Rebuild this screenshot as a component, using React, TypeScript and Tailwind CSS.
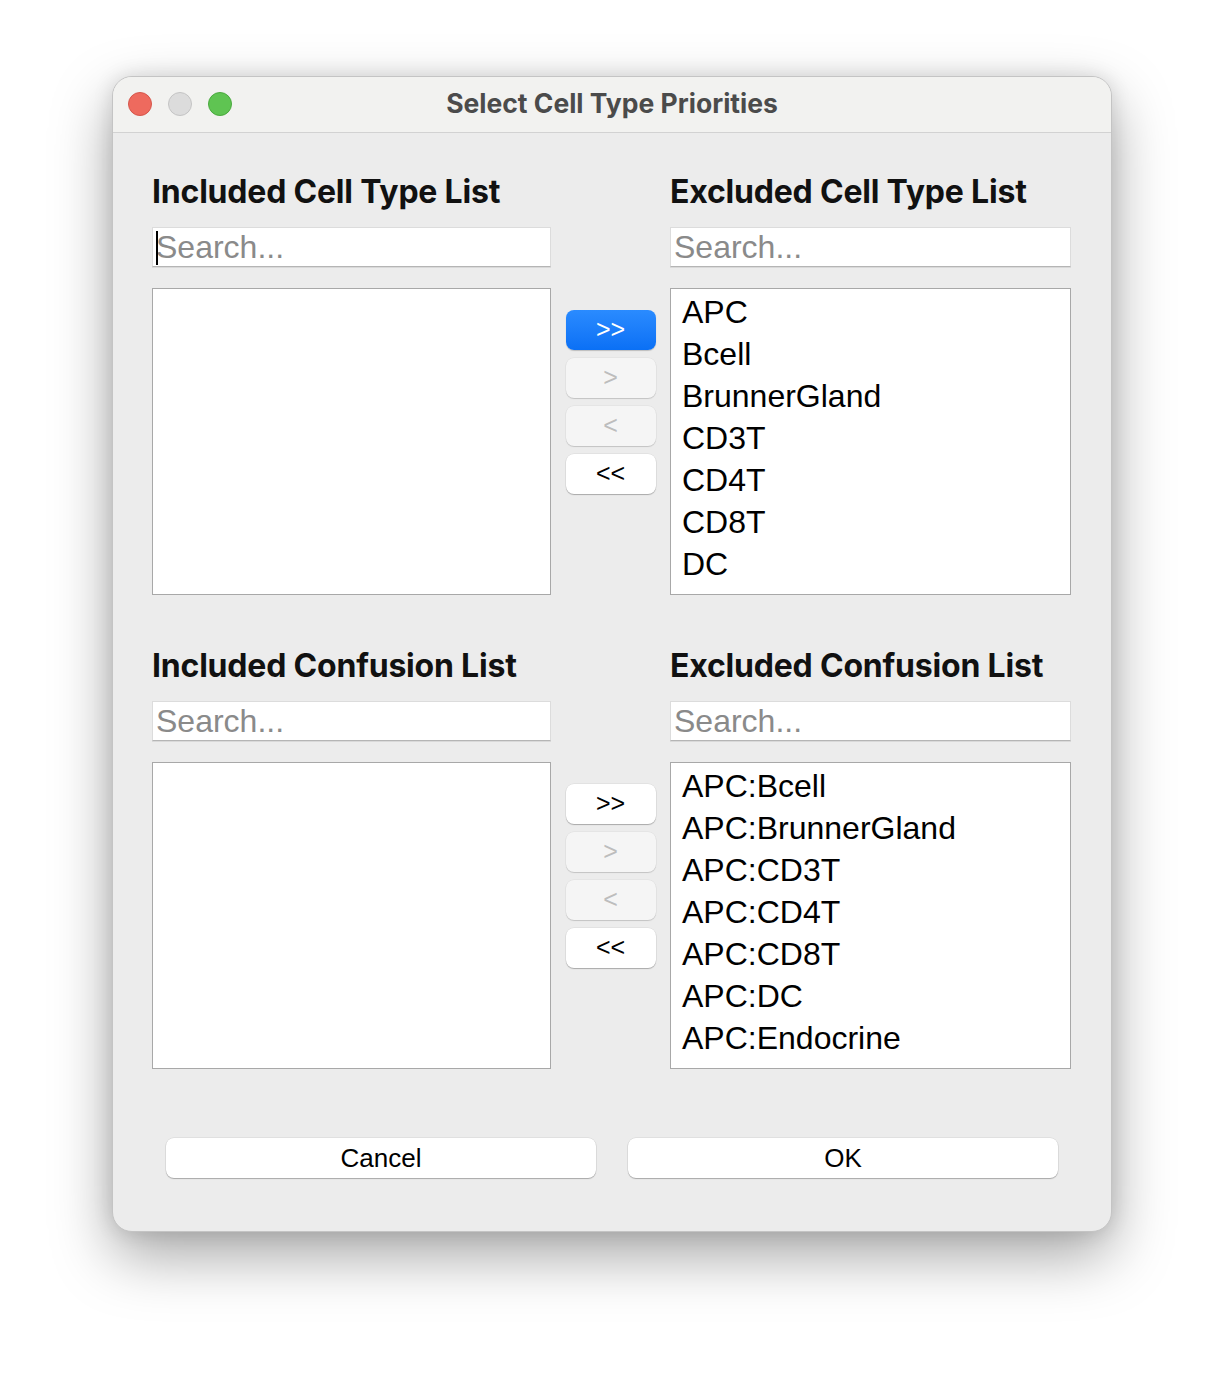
import React from "react";

const cellTypes = ["APC", "Bcell", "BrunnerGland", "CD3T", "CD4T", "CD8T", "DC", "Endocrine"];
const confusions = ["APC:Bcell", "APC:BrunnerGland", "APC:CD3T", "APC:CD4T", "APC:CD8T", "APC:DC", "APC:Endocrine", "APC:Endothelial"];

function SearchBox({ caret }: { caret?: boolean }) {
  return (
    <div className="relative h-[40px] w-full bg-white border border-[#dcdcdc] border-b-[#b5b5b5] shadow-[0_1px_0_rgba(0,0,0,0.08)] flex items-center pl-[3px]">
      {caret && <div className="absolute left-[3px] top-[3px] h-[34px] w-[2px] bg-black" />}
      <span className="text-[32px] leading-none text-[#8a8a8a] font-['Liberation_Sans',sans-serif]">Search...</span>
    </div>
  );
}

function ListBox({ items }: { items: string[] }) {
  return (
    <div className="h-[307px] w-full bg-white border border-[#a8a8a8] overflow-hidden pl-[11px] pt-[2px]">
      {items.map((t) => (
        <div key={t} className="h-[42px] leading-[42px] text-[32px] text-black font-['Liberation_Sans',sans-serif] whitespace-nowrap">
          {t}
        </div>
      ))}
    </div>
  );
}

function ArrowBtn({ label, variant }: { label: string; variant: "primary" | "disabled" | "normal" }) {
  const base = "h-[40px] w-[90px] rounded-[8px] flex items-center justify-center text-[25px] font-['Liberation_Sans',sans-serif]";
  const cls =
    variant === "primary"
      ? "bg-gradient-to-b from-[#2a8bff] to-[#0a70f5] text-white shadow-[0_1px_1px_rgba(0,0,0,0.2)]"
      : variant === "disabled"
      ? "bg-[#f5f5f5] text-[#bdbdbd] shadow-[0_1px_1px_rgba(0,0,0,0.15),0_0_0_0.5px_rgba(0,0,0,0.06)]"
      : "bg-white text-black shadow-[0_1px_1px_rgba(0,0,0,0.25),0_0_0_0.5px_rgba(0,0,0,0.08)]";
  return <div className={`${base} ${cls}`}>{label}</div>;
}

function Section({ leftTitle, rightTitle, items, primaryFirst, caret }: { leftTitle: string; rightTitle: string; items: string[]; primaryFirst?: boolean; caret?: boolean }) {
  return (
    <div className="flex items-start">
      <div className="w-[399px] flex flex-col">
        <h2 className="h-[36px] text-[32px] leading-[38px] font-bold text-[#111] font-['Inter',sans-serif] tracking-[-0.2px] whitespace-nowrap">{leftTitle}</h2>
        <div className="mt-[18px]"><SearchBox caret={caret} /></div>
        <div className="mt-[21px]"><ListBox items={[]} /></div>
      </div>
      <div className="w-[119px] flex flex-col items-center gap-[8px] pt-[137px]">
        <ArrowBtn label=">>" variant={primaryFirst ? "primary" : "normal"} />
        <ArrowBtn label=">" variant="disabled" />
        <ArrowBtn label="<" variant="disabled" />
        <ArrowBtn label="<<" variant="normal" />
      </div>
      <div className="w-[401px] flex flex-col">
        <h2 className="h-[36px] text-[32px] leading-[38px] font-bold text-[#111] font-['Inter',sans-serif] tracking-[-0.2px] whitespace-nowrap">{rightTitle}</h2>
        <div className="mt-[18px]"><SearchBox /></div>
        <div className="mt-[21px]"><ListBox items={items} /></div>
      </div>
    </div>
  );
}

export default function App() {
  return (
    <div className="w-[1224px] h-[1380px] bg-white pt-[76px] pl-[112px]">
      <div className="w-[1000px] h-[1156px] rounded-[20px] bg-[#ececec] overflow-hidden border border-[#c4c4c4] shadow-[0_24px_60px_rgba(0,0,0,0.35),0_0_20px_rgba(0,0,0,0.12)] flex flex-col">
        <div className="h-[56px] bg-[#f2f2f0] border-b border-[#d2d2d2] relative flex items-center justify-center shrink-0">
          <div className="absolute left-[15px] top-[15px] flex gap-[16px]">
            <div className="w-[24px] h-[24px] rounded-full bg-[#ee6a5e] border border-[#d5564b]" />
            <div className="w-[24px] h-[24px] rounded-full bg-[#dcdcdc] border border-[#c4c4c4]" />
            <div className="w-[24px] h-[24px] rounded-full bg-[#5fc452] border border-[#4aa93e]" />
          </div>
          <span className="text-[26.5px] font-bold text-[#4b4b4b] font-['Inter',sans-serif] -mt-[2px]">Select Cell Type Priorities</span>
        </div>
        <div className="pl-[39px] pt-[40px] flex flex-col">
          <Section leftTitle="Included Cell Type List" rightTitle="Excluded Cell Type List" items={cellTypes} primaryFirst caret />
          <div className="mt-[52px]">
            <Section leftTitle="Included Confusion List" rightTitle="Excluded Confusion List" items={confusions} />
          </div>
          <div className="mt-[69px] ml-[14px] flex gap-[32px]">
            <div className="h-[40px] w-[430px] rounded-[8px] bg-white shadow-[0_1px_1px_rgba(0,0,0,0.25),0_0_0_0.5px_rgba(0,0,0,0.1)] flex items-center justify-center text-[26px] text-black font-['Liberation_Sans',sans-serif]">Cancel</div>
            <div className="h-[40px] w-[430px] rounded-[8px] bg-white shadow-[0_1px_1px_rgba(0,0,0,0.25),0_0_0_0.5px_rgba(0,0,0,0.1)] flex items-center justify-center text-[26px] text-black font-['Liberation_Sans',sans-serif]">OK</div>
          </div>
        </div>
      </div>
    </div>
  );
}
